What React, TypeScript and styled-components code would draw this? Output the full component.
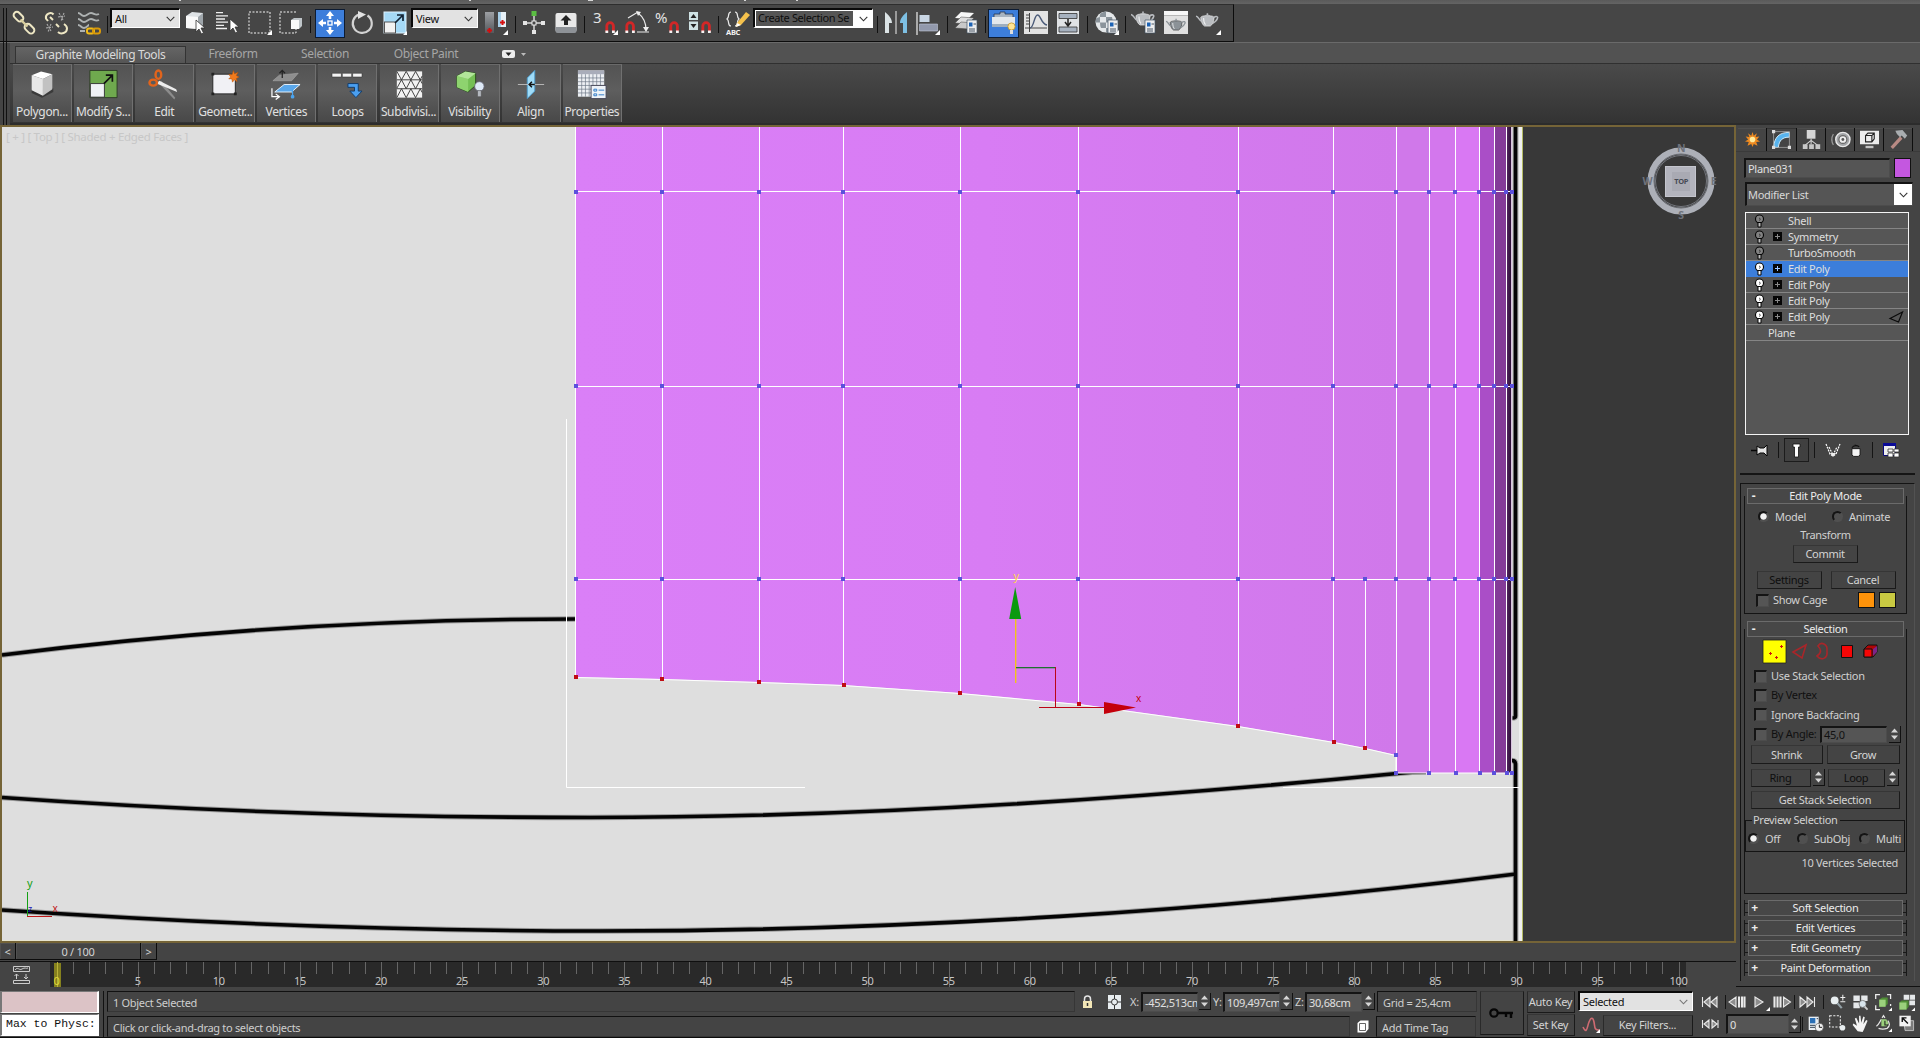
import React from "react";
import styled, { createGlobalStyle, css } from "styled-components";

const Global = createGlobalStyle`
  *, *::before, *::after { box-sizing: border-box; }
  body { margin: 0; background: #444; overflow: hidden; }
  svg { display: block; flex: none; overflow: visible; }
`;

const sans = `"Noto Sans", "Open Sans", "DejaVu Sans", sans-serif`;

const App_ = styled.div`
  width: 1920px;
  height: 1038px;
  display: flex;
  flex-direction: column;
  background: #444;
  color: #d8d8d8;
  font: 11px/14px ${sans};
  letter-spacing: -0.3px;
  white-space: nowrap;
  overflow: hidden;
`;

/* ---------- main toolbar ---------- */
const MenuEdge = styled.div`
  height: 4px;
  flex: none;
  display: flex;
  background: linear-gradient(#5a5a5a, #646464);
`;
const Descender = styled.i<{ $gap: number; $w?: number }>`
  width: ${(p) => p.$w ?? 2}px;
  height: 1px;
  margin-left: ${(p) => p.$gap}px;
  background: #d8d8d8;
`;
const ToolbarRow = styled.div`
  height: 39px;
  flex: none;
  display: flex;
  background: #464646;
  border-bottom: 1px solid #6a6a6a;
`;
const Toolbar = styled.div`
  width: 1234px;
  height: 38px;
  display: flex;
  border-top: 1px solid #2e2e2e;
  border-right: 1px solid #0c0c0c;
  border-bottom: 1px solid #0c0c0c;
  padding-top: 4px;
`;
const Grip = styled.div`
  width: 4px;
  margin: -1px 1px 0 3px;
  border-left: 1px solid #111;
  border-right: 1px solid #111;
`;
const Slot = styled.div<{ $w: number; $on?: boolean }>`
  width: ${(p) => p.$w}px;
  height: 29px;
  flex: none;
  display: flex;
  align-items: center;
  justify-content: center;
  padding-bottom: 2px;
  ${(p) => p.$on && css`background: #3d7edb; border: 1px solid #0d1c33; padding-bottom: 1px;`}
`;
const Divider = styled.div<{ $w: number }>`
  width: ${(p) => p.$w}px;
  display: flex;
  justify-content: center;
  padding: 7px 0 8px;
  &::before { content: ""; width: 1px; background: #111; }
`;
const Combo = styled.div<{ $w: number; $h?: number }>`
  width: ${(p) => p.$w}px;
  height: ${(p) => p.$h ?? 19}px;
  flex: none;
  display: flex;
  align-items: center;
  justify-content: space-between;
  padding: 0 4px 0 3px;
  color: #111;
  font-size: 11px;
  background: #e2e2e2;
  border: 1px solid #fff;
  border-top: 2px solid #0a0a0a;
  border-left: 2px solid #0a0a0a;
`;
const ToolCombo = styled(Combo)`
  margin: -1px 1px 0;
`;
const NameCombo = styled(Combo)`
  margin-top: -1px;
  padding: 1px 4px 1px 1px;
  background: #fff;
`;
const NameText = styled.span`
  width: 97px;
  height: 15px;
  overflow: hidden;
  padding-left: 2px;
  background: #555;
  color: #0d0d0d;
  letter-spacing: -0.4px;
`;
const Chevron = ({ c = "#333" }: { c?: string }) => (
  <svg width="9" height="6" viewBox="0 0 9 6"><path d="M.7.8 4.5 4.8 8.3.8" fill="none" stroke={c} strokeWidth="1.1" /></svg>
);

const Icon = ({ s = 24, children }: { s?: number; children: React.ReactNode }) => (
  <svg width={s} height={s} viewBox="0 0 24 24">{children}</svg>
);
const Corner = () => <path d="M24 19v5h-5z" fill="#fff" />;
const Magnet = ({ x, y }: { x: number; y: number }) => (
  <g transform={`translate(${x} ${y})`}>
    <path d="M1.8 11V5a3.3 3.3 0 0 1 6.6 0v6" fill="none" stroke="#d22727" strokeWidth="2.8" />
    <path d="M.4 9.4h2.8V12H.4zM7 9.4h2.8V12H7z" fill="#f4f4f4" />
  </g>
);
const MiniPanel = ({ x, y }: { x: number; y: number }) => (
  <g transform={`translate(${x} ${y})`}>
    <path d="M0 0h10v13H0z" fill="#eee" stroke="#456" strokeWidth=".7" />
    <path d="M2 2.5h3.5v4H2z" fill="#1d63b5" />
    <path d="M6.5 4H9M2 9h6M2 11h6" stroke="#345" strokeWidth=".9" />
  </g>
);
const Teapot = ({ fill = "#b9bcc0", line = "#efefef" }: { fill?: string; line?: string }) => (
  <g>
    <path d="M5 9c0-1 2-2 7-2s7 1 7 2c0 4-2 8-4 9H9C7 17 5 13 5 9z" fill={fill} stroke={line} strokeWidth=".7" />
    <path d="M6 13C3 12 3 8 0 7.500M18.500 9c3-2 5-1 4 1-.6 2-3 4-5 5" fill="none" stroke={fill} strokeWidth="1.600" />
    <path d="M9 7.200C9 5.800 15 5.800 15 7.200zM11.200 4.500h1.600v2h-1.600z" fill={fill} />
    <path d="M8 9.500c0 3 1 6 2 7" stroke="#fff" strokeWidth="1.100" fill="none" opacity=".8" />
  </g>
);

const G: Record<string, React.ReactNode> = {
  link: (
    <g fill="none" stroke="#eee7c4" strokeWidth="2">
      <rect x="1" y="2.500" width="11" height="6.500" rx="3.200" transform="rotate(45 6.500 5.700)" />
      <rect x="12" y="14.500" width="11" height="6.500" rx="3.200" transform="rotate(45 17.500 17.700)" />
      <path d="m8.500 8.500 7 7" stroke="#d9cf9f" strokeWidth="2.400" />
    </g>
  ),
  unlink: (
    <g fill="none" stroke="#eee7c4" strokeWidth="2">
      <path d="M9.500 3.500C7 .5 1 3 2 7.500l2 2.500M14 21c3 3 9 1 9-3.500 0-2-1.500-3.500-3-4.500M12 13l3 3M9 9 6 6" />
      <path d="M15 2l4 7M14 6l7-1M20 2l-3 8M3 13l4 7M2 17l7-1M7 13l-3 8" stroke="#a7a7a7" strokeWidth="1.200" strokeDasharray="2 1" />
    </g>
  ),
  bind: (
    <g fill="none">
      <path d="M1 2c3 0 3 3 6 3s4-3 7-3 4 3 8 1M1 8c3 0 3 3 6 3s4-3 7-3 4 3 8 1M1 14c3 0 3 3 6 3s4-3 5-3M3 20h5" stroke="#aeb2b2" strokeWidth="1.900" />
      <rect x="10" y="17.500" width="7" height="5" rx="2" stroke="#f3bc17" strokeWidth="2" />
      <rect x="16" y="17.500" width="7" height="5" rx="2" stroke="#d99a09" strokeWidth="2" />
    </g>
  ),
  select: (
    <g>
      <path d="m2 5 6-4 11 1v12l-5 4-12-1z" fill="#dfe3e6" /><path d="m2 5 12 1v12L2 17z" fill="#fafafa" /><path d="m14 6 5-4v12l-5 4z" fill="#9fa6ab" />
      <path d="M12 9v12l3-3 2.500 5 2-1-2.500-5h4z" fill="#fff" stroke="#333" strokeWidth=".8" />
    </g>
  ),
  byname: (
    <g stroke="#efefef" strokeWidth="1.300">
      <path d="M1 1.600h7M1 4.800h12M1 8h9M1 11.200h12M1 14.400h8M1 17.500h11" />
      <path d="M15 8v12l3-3 2.500 5 2-1L20 16h4z" fill="#fff" stroke="#333" strokeWidth=".8" />
    </g>
  ),
  rect: <g><rect x="1" y="1" width="21" height="21" fill="none" stroke="#f4f4f4" strokeDasharray="2 1.500" /><Corner /></g>,
  window: (
    <g><path d="M17 1H1v21h16v-5" fill="none" stroke="#f4f4f4" strokeDasharray="2 1.500" />
      <path d="m12 9 3-2h8v8l-3 3h-8z" fill="#bfc5c9" /><path d="M12 9h8v9h-8z" fill="#fafafa" /></g>
  ),
  move: (
    <g fill="#fff"><path d="m12 0 4 5h-2.700v3h-2.600V5H8zM12 24l4-5h-2.700v-3h-2.600v3H8zM0 12l5-4v2.700h3v2.600H5V16zM24 12l-5-4v2.700h-3v2.600h3V16z" /><rect x="10" y="10" width="4" height="4" fill="none" stroke="#fff" strokeWidth="1.300" /></g>
  ),
  rotate: (
    <g><path d="M9 3.500a9.500 9.500 0 1 0 8.500 1" fill="none" stroke="#d3d3d3" strokeWidth="2.200" /><path d="m8 0 8 3.500L8 8z" fill="#e3e3e3" /></g>
  ),
  scale: (
    <g><rect x="1" y="1" width="22" height="21" fill="#a5d9f6" stroke="#dff2fd" /><rect x="1.500" y="11" width="11" height="11" fill="#f2f2f2" stroke="#555" />
      <path d="m12 12 7-7M14 4h6v6" stroke="#123" strokeWidth="1.700" fill="none" /><path d="M24 20v4h-4z" fill="#fff" /></g>
  ),
  pivot: (
    <g><defs><linearGradient id="pv" x1="0" x2="0" y1="0" y2="1"><stop offset="0" stopColor="#9c9fa3" /><stop offset="1" stopColor="#55585c" /></linearGradient></defs>
      <path d="M1 1h9v21H1z" fill="url(#pv)" /><path d="M14 1h8v15h-8z" fill="#e6f0f6" /><path d="M14 1h3v15h-3z" fill="#a8cfe8" />
      <path d="M5.500 17v5M3 19.500h5M18.500 9v5M16 11.500h5" stroke="#d30f0f" strokeWidth="2" /><Corner /></g>
  ),
  manip: (
    <g><path d="M12 4v16M4 12h16" stroke="#d8d8d8" strokeWidth="1.500" /><rect x="9.500" y="0" width="5" height="5" fill="#5bbd43" />
      <rect x="10" y="10" width="4" height="4" fill="#464646" stroke="#eee" /><path d="M1 10h4v4H1zM19 10h4v4h-4zM10 19h4v4h-4z" fill="#e5e5e5" /></g>
  ),
  kbd: <g><rect x="1.500" y="2" width="21" height="19" rx="2" fill="#e9e9e9" /><path d="M1.500 16h21v4a2 2 0 0 1-2 2h-17a2 2 0 0 1-2-2z" fill="#8e9297" /><path d="m12 4 5.500 5.500H14V14h-4V9.500H6.500z" fill="#222" /></g>,
  snap3: <g transform="translate(1 0)"><text x="-1" y="12" fill="#e3e3e3" fontSize="15" fontFamily="Noto Sans">3</text><Magnet x={11} y={10} /><Corner /></g>,
  angle: <g transform="translate(1 0)"><Magnet x={0} y={10} /><path d="m3 7 10-6M12 21h12M13 2q8 6 8 17" stroke="#e9e9e9" strokeWidth="1.200" fill="none" /><path d="m11 0 5 1-3 4zM18 16l3 5 3-5z" fill="#eee" /></g>,
  percent: <g transform="translate(1 0)"><text x="-1" y="12" fill="#e3e3e3" fontSize="15" fontFamily="Noto Sans">%</text><Magnet x={13} y={10} /></g>,
  spinsnap: <g transform="translate(1 0)"><path d="M1 1h9v8H1zM1 10.500h9V19H1z" fill="#cfe2e4" /><path d="m2.500 7 3-4 3 4zM2.500 13l3 4 3-4z" fill="#222" /><Magnet x={13} y={10} /></g>,
  named: (
    <g><path d="M5 1C1 1 4 6 1 8c3 2 0 7 4 7M9 1c4 0 1 5 4 7-3 2 0 7-4 7" fill="none" stroke="#eaeaea" strokeWidth="1.200" />
      <path d="m11 12 9-11 4 3-9 10-5 2z" fill="#f5c14c" /><path d="m11 12 4 2-5 2z" fill="#fff" /><text x="0" y="23.500" fill="#f2f2f2" fontSize="7.500" fontWeight="700" fontFamily="Noto Sans">ABC</text></g>
  ),
  mirror: <g><path d="M1 1c4 3 7 7 7 11H5v10H1z" fill="#dbe3e5" /><path d="M23 1c-4 3-7 7-7 11h3v10h4z" fill="#7dbfe3" /><path d="M12 0v23" stroke="#eee" /></g>,
  align: <g><path d="M1 1v23" stroke="#eee" strokeWidth="1.200" /><path d="M3.500 4h10v7h-10z" fill="#c9d6e4" /><path d="M3.500 13h18v7h-18z" fill="#9299ac" stroke="#bfc6d6" strokeWidth=".6" /><Corner /></g>,
  layers: <g><path d="m7 1 13 1-6 6-13-1z" fill="#f7f7f7" /><path d="m7 6 13 1-6 6-13-1z" fill="#dedede" stroke="#444" strokeWidth=".5" /><path d="m7 11 13 1-6 6-13-1z" fill="#c9c9c9" stroke="#444" strokeWidth=".5" /><MiniPanel x={13} y={9} /></g>,
  folder: (
    <g><path d="M2 3h6V1h5v2h8v5H2z" fill="#a8b4c1" stroke="#273650" strokeWidth=".8" /><path d="M0 6h23v10H0z" fill="#e4e8ec" /><path d="M0 13h23v3H0z" fill="#9fafbf" />
      <circle cx="19.500" cy="15.500" r="3.600" fill="#ffe596" stroke="#c59320" strokeWidth=".8" /><path d="M18 19h3v4h-3z" fill="#ddd" /></g>
  ),
  curve: <g><path d="M0 0h24v23H0z" fill="#e3e3e3" /><path d="M5.500 2v19M1 17h22M2 4h3M2 7h3M2 10h3M2 13h3" stroke="#444" /><path d="M6 17C10 17 10 4 13.500 4S17 13 23 14" fill="none" stroke="#4a5a78" strokeWidth="1.400" /></g>,
  schem: <g><path d="M1 0h22v23H1z" fill="#dfe2e5" /><path d="M3 2.500h18v5H3zM3 16h18v5H3z" fill="#a7b2c0" stroke="#333" strokeWidth=".8" /><path d="M12 8v6M9 11l3 4 3-4" stroke="#222" strokeWidth="1.500" fill="none" /></g>,
  material: (
    <g><circle cx="11" cy="11" r="10.500" fill="#e5e8ea" />
      <path d="M5.500 2.500Q9 .5 11 .5V6H5q-1 0 .5-3.500zM11 6h6l1 5.500h-7zM1 7.500Q3 6 5 6v5.500H.5zM5 11.500h6V17H6q-1-2-1-5.500zM11 17h5q-1 3-3 4.300L11 21.500z" fill="#8b949b" /><MiniPanel x={13} y={9} /><Corner /></g>
  ),
  rsetup: <g><g transform="translate(-1 -4)"><Teapot /></g><MiniPanel x={13} y={9} /></g>,
  rframe: <g><path d="M0 0h24v23H0z" fill="#e0e0e0" /><path d="M0 0h24v4H0z" fill="#f6f6f6" /><path d="M0 4.500h24" stroke="#999" strokeWidth=".6" /><g transform="translate(2 4) scale(.84)"><Teapot fill="#8b9297" line="#333" /></g></g>,
  render: <g><g transform="translate(-1 -2) scale(.95)"><Teapot /></g><Corner /></g>,
};

/* kind, width, icon */
const tools: [string, number, string?][] = [
  ["i", 32, "link"], ["i", 32, "unlink"], ["i", 33, "bind"], ["d", 4], ["c", 72, "All"],
  ["i", 30, "select"], ["i", 32, "byname"], ["i", 34, "rect"], ["i", 28, "window"], ["d", 10],
  ["on", 30, "move"], ["i", 34, "rotate"], ["i", 31, "scale"], ["c", 69, "View"], ["i", 34, "pivot"], ["d", 4],
  ["i", 33, "manip"], ["i", 31, "kbd"], ["d", 7], ["i", 33, "snap3"], ["i", 29, "angle"], ["i", 34, "percent"],
  ["i", 30, "spinsnap"], ["d", 9], ["i", 30, "named"], ["n", 120, "Create Selection Se"], ["d", 8],
  ["i", 30, "mirror"], ["i", 34, "align"], ["d", 5], ["i", 32, "layers"], ["d", 6], ["on", 31, "folder"],
  ["i", 34, "curve"], ["i", 30, "schem"], ["d", 8], ["i", 32, "material"], ["d", 5], ["i", 32, "rsetup"],
  ["i", 32, "rframe"], ["i", 34, "render"],
];

/* ---------- ribbon ---------- */
const Ribbon = styled.div`
  height: 82px;
  flex: none;
  display: flex;
  background: #444;
`;
const RibbonBody = styled.div`
  flex: 1;
  margin-left: 2px;
  display: flex;
  flex-direction: column;
  background: #525252;
`;
const Tabs = styled.div`
  height: 21px;
  display: flex;
  align-items: flex-end;
  padding-left: 5px;
  border-bottom: 1px solid #303030;
  font-size: 12px;
  letter-spacing: -0.35px;
`;
const Tab = styled.div<{ $w: number; $on?: boolean }>`
  width: ${(p) => p.$w}px;
  height: 17px;
  line-height: 16px;
  text-align: center;
  color: ${(p) => (p.$on ? "#dadada" : "#a6a6a6")};
  ${(p) => p.$on && css`background: linear-gradient(#656565, #555); border: 1px solid #333; border-bottom: 0; line-height: 15px;`}
`;
const Panels = styled.div`
  flex: 1;
  display: flex;
  gap: 2.1px;
  padding: 0 0 1px 3px;
  background: linear-gradient(#4a4a4a, #333);
  border-bottom: 2px solid #2c2c2c;
`;
const Panel = styled.div`
  width: 59px;
  height: 58px;
  flex: none;
  display: flex;
  flex-direction: column;
  align-items: center;
  padding-top: 5px;
  background: linear-gradient(#535353, #5e5e5e 45%, #484848);
  border-top: 1px solid #6a6a6a;
  border-right: 1px solid #707070;
  font-size: 12px;
  line-height: 16px;
  letter-spacing: -0.35px;
  color: #e0e0e0;
  svg { margin-bottom: 5px; }
`;
const P = ({ children }: { children: React.ReactNode }) => <svg width="30" height="29" viewBox="0 0 32 30">{children}</svg>;
const panels: [string, React.ReactNode][] = [
  ["Polygon...", <><path d="M5 20v4l11 5 12-6v-4z" fill="#2c2c2c" opacity=".7" /><path d="m5 5 10-4 12 3-10 5z" fill="#fff" /><path d="m5 5 12 4v18L5 21z" fill="#e8e8e8" /><path d="m17 9 10-5v16l-10 7z" fill="#c2c2c2" /></>],
  ["Modify S...", <><path d="M2 0h29v29H2z" fill="#6fa94e" stroke="#2d3b25" /><path d="M2.500 14h15v14.500h-15z" fill="#f0f2f5" stroke="#333" /><path d="m17 14 8-8M19 5h7v7" stroke="#111" strokeWidth="1.800" fill="none" /></>],
  ["Edit", <><path d="m10 13 17 18 1-2L13 11z" fill="#8c8c8c" /><path d="m8 14 22 9-1-3-18-9z" fill="#ececec" /><g fill="none" stroke="#e1641c" strokeWidth="2.600"><ellipse cx="10" cy="4.500" rx="3" ry="4.500" /><ellipse cx="4.500" cy="13" rx="4" ry="3.200" /></g></>],
  ["Geometr...", <><path d="M3 4h24v21H3z" fill="#f1f1f5" stroke="#222" /><path d="M1.500 2.500h3v3h-3zM1.500 23.500h3v3h-3zM25.500 23.500h3v3h-3z" fill="#222" /><path d="m25 0 1.200 3.500L30 2l-2 3.500 3 1.500-3 1.500 1 3.500-3-2-2 2.500-.8-3.500L20 9l2-2-2-3 3.500.5z" fill="#f07a1d" stroke="#b24d05" strokeWidth=".5" /></>],
  ["Vertices", <><path d="m2 11 7-6 20-2-7 8z" fill="#8e8e8e" stroke="#aaa" strokeWidth=".6" /><path d="M12 8V0M9 3l3-3 3 3" stroke="#222" strokeWidth="1.300" fill="none" /><path d="m4 23 10-8h17l-9 8z" fill="#5aa7ea" stroke="#e7f3fd" /><path d="M1 19v9h7M5 25l4 3-4 3" stroke="#fff" strokeWidth="1.300" fill="none" /><path d="M23 20v8" stroke="#4ba4ef" strokeWidth="1.300" /><circle cx="23" cy="28" r="2" fill="#4ba4ef" /></>],
  ["Loops", <><path d="M0 3h10v4H0zM11 3h10v4H11zM22 3h10v4H22z" fill="#f4f4f4" stroke="#333" strokeWidth=".6" /><path d="M17 14h11v8h4l-6.500 7-6.500-7h5v-4h-7z" fill="#4a9ff0" stroke="#123a66" /></>],
  ["Subdivisi...", <><path d="M3 1h27v28H3z" fill="#f2f2f2" /><path d="M3 10h27M3 19.500h27M3 1l5 9 5-9 5 9 5-9 5 9 2-4M3 19l5-9 5 9.500L18 10l5 9.500L28 10l2 4M3 29l5-9.500 5 9.500 5-9.500 5 9.500 5-9.500 2 4" stroke="#3a3a3a" fill="none" /></>],
  ["Visibility", <><path d="m2 6 9-5 11 2v13l-8 7-12-5z" fill="#74bf55" stroke="#294b1d" /><path d="m2 6 12 3v14L2 18z" fill="#8ed36f" /><path d="m2 6 9-5 11 2-8 6z" fill="#b2e69a" /><circle cx="26" cy="17" r="5" fill="#dde9f6" stroke="#667" strokeWidth=".8" /><path d="M24 21.500h4V28h-4z" fill="#b5b9c0" stroke="#444" strokeWidth=".5" /></>],
  ["Align", <><path d="M12 8 20 0v22l-8 8z" fill="#9fdcf8" stroke="#4f9ccc" /><path d="M2 15h28" stroke="#c5c5c5" strokeWidth=".9" /><path d="M14 15h6M17 12l-3 3 3 3" stroke="#111" strokeWidth="1.500" fill="none" /></>],
  ["Properties", <><path d="M1 0h28v28H1z" fill="#edf0f4" /><path d="M1 0h28v4H1z" fill="#a9adba" /><path d="M1 8h28M1 12h28M1 16h28M1 20h28M1 24h28M5 4v24M9 4v24M13 4v24M17 4v24M21 4v24M25 4v24" stroke="#6a7484" strokeWidth=".7" /><path d="M15 16h16v14H15z" fill="#eef3f8" stroke="#445" /><path d="M18 20h3v2h-3zM18 25h3v2h-3z" fill="none" stroke="#2b79c8" /><path d="M23 21h6M23 26h6" stroke="#2b79c8" /></>],
];

/* ---------- viewport ---------- */
const Work = styled.div`
  height: 862px;
  flex: none;
  display: flex;
`;
const LeftCol = styled.div`
  width: 1736px;
  display: flex;
  flex-direction: column;
`;
const cols = [662, 759, 843, 960, 1078, 1238, 1333, 1396, 1429, 1455, 1479, 1494, 1506];
/* edge row, centre of its vertex ticks */
const rows: [number, number][] = [[191, 192], [386, 386], [579, 579]];
const reds: [number, number][] = [[576, 677], [662, 679], [759, 682], [844, 685], [960, 693], [1079, 704], [1238, 726], [1334, 742], [1365, 748]];
const bottomOf = (x: number) => (x >= 1396 ? 773 : (reds.find((r) => Math.abs(r[0] - x) < 2) ?? [0, 748])[1]);

const Viewport = () => (
  <svg width="1736" height="818" viewBox="0 125 1736 818" fontFamily="Noto Sans">
    <defs>
      <linearGradient id="mesh" gradientUnits="userSpaceOnUse" x1="576" x2="1396" y1="0" y2="0">
        <stop offset="0" stopColor="#da7ff7" /><stop offset=".5" stopColor="#d87cf4" /><stop offset="1" stopColor="#d078ea" />
      </linearGradient>
      <linearGradient id="edge" x1="0" x2="1" y1="0" y2="0"><stop offset="0" stopColor="#5a2869" /><stop offset="1" stopColor="#220d29" /></linearGradient>
    </defs>
    <rect y="125" width="1736" height="818" fill="#756437" />
    <rect x="2" y="127" width="1732" height="814" fill="#383838" />
    <rect x="2" y="127" width="1520" height="814" fill="#dedede" />
    <path d="M2 940.500h1520" stroke="#e6e4cf" />
    <path d="M1520.500 127v814" stroke="#efefef" strokeWidth="3" />
    <path d="M1522.500 127v814" stroke="#b3bb62" />
    <g fill="none" stroke="#9a9a9a" strokeWidth="5.500">
      <path d="M2 655Q288 619 576 619" />
      <path d="M2 797.500C200 811.500 400 817.500 590 817.500c260 0 540-18 807-44q16-1.500 29-1.500" />
      <path d="M2 910c178 12 398 21 598 21 300 0 620-20 916-57" />
      <path d="M1515.500 127v589q0 2-3 2M1512 760.500q3.500 0 3.500 4v176.500" />
    </g>
    <g fill="none" stroke="#040404" strokeWidth="3.600">
      <path d="M2 655Q288 619 576 619" />
      <path d="M2 797.500C200 811.500 400 817.500 590 817.500c260 0 540-18 807-44q16-1.500 29-1.500" />
      <path d="M2 910c178 12 398 21 598 21 300 0 620-20 916-57" />
      <path d="M1515.500 127v589q0 2-3 2M1512 760.500q3.500 0 3.500 4v176.500" />
    </g>
    <path d="M575 127h937v646h-116v-18l-31-7-31-6-96-16-159-22-119-11-117-8-84-3-97-3-87-2z" fill="url(#mesh)" />
    <path d="M1429 127h26v646h-26z" fill="#d377ed" /><path d="M1455 127h24v646h-24z" fill="#d978f3" />
    <path d="M1479 127h15v646h-15z" fill="#aa4ec7" /><path d="M1494 127h12v646h-12z" fill="#843b98" />
    <path d="M1506 127h6v646h-6z" fill="url(#edge)" />
    <g stroke="#fff" fill="none">
      {cols.map((x) => <path key={x} d={`M${x + 0.5} 127V${bottomOf(x)}`} />)}
      <path d="M575.500 127v550M1365.500 579v169" /><path d="M1511.500 127v646" stroke="#d9c4df" />
      {rows.map(([y]) => <path key={y} d={`M575 ${y + 0.5}H1512`} />)}
      <path d="m576 677.500 86 2 97 3 84 3 117 8 119 11 159 22 96 16 31 6 31 7v17.500h116" />
      <path d="M566.500 419v368.500H805M1283 787.500h236" />
    </g>
    <g fill="#5c50dc">
      {rows.map(([, y]) => [576, ...cols, ...(y === 579 ? [1365] : []), 1512].map((x) => <rect key={`${x}-${y}`} x={x - 2} y={y - 2} width="4" height="4" />))}
      {[1396, 1429, 1456, 1480, 1494, 1507, 1512].map((x) => <rect key={x} x={x - 2} y="771" width="4" height="4" />)}
      <rect x="1394" y="753" width="4" height="4" />
    </g>
    <g fill="#c00c14">{reds.map(([x, y]) => <rect key={x} x={x - 2} y={y - 2} width="4" height="4" />)}</g>
    <rect x="1015" y="619" width="1.400" height="64" fill="#f2c518" /><path d="m1015.200 587 6 32h-12z" fill="#0a9a0e" />
    <rect x="1016" y="667" width="39" height="1.300" fill="#1f7030" />
    <path d="M1055.500 667v40M1039 707.500h66" stroke="#bb0517" fill="none" /><path d="m1136 707.500-32 6.500v-12z" fill="#c4000b" />
    <text x="1013.500" y="579.500" fontSize="11" fill="#ffd84a">y</text><text x="1136" y="702" fontSize="10" fill="#c4000b">x</text>
    <path d="M27.500 892v25" stroke="#14a014" /><path d="M27 916.500h25" stroke="#c01818" />
    <text x="27" y="887" fontSize="11" fill="#14a014">y</text><text x="52.500" y="912" fontSize="10" fill="#c01818">x</text><text x="28" y="912" fontSize="9" fill="#1616b4">z</text>
    <text x="6" y="141" fontSize="11.500" textLength="182" fill="#c7c7c7">[ + ] [ Top ] [ Shaded + Edged Faces ]</text>
    <circle cx="1681" cy="181" r="30" fill="none" stroke="#adb0b8" strokeWidth="7" />
    <circle cx="1681" cy="181" r="25.500" fill="none" stroke="#74777e" /><circle cx="1681" cy="181" r="27" fill="none" stroke="#54575c" strokeWidth=".8" />
    <rect x="1665.500" y="166.500" width="30" height="30" fill="#b3b4bd" stroke="#c4c5cd" /><rect x="1672" y="172" width="18" height="19" fill="#a9aab3" />
    <g fill="#6f737c" fontWeight="700" fontSize="10.500" textAnchor="middle">
      <text x="1681" y="152">N</text><text x="1681" y="218.500">S</text><text x="1647.500" y="185">W</text><text x="1713.500" y="185">E</text>
      <text x="1681.300" y="184" fontSize="7.500" fill="#474a55">TOP</text>
    </g>
  </svg>
);

/* ---------- time slider and track bar ---------- */
const SliderRow = styled.div`
  height: 19px;
  display: flex;
  align-items: flex-start;
  border-bottom: 1px solid #0f0f0f;
  color: #d4d4d4;
`;
const SliderCell = styled.div<{ $w: number }>`
  width: ${(p) => p.$w}px;
  height: 17px;
  line-height: 17px;
  text-align: center;
  border-right: 1px solid #0c0c0c;
  border-bottom: 1px solid #0c0c0c;
  box-shadow: inset 1px 1px #505050;
`;
const Track = styled.div`
  height: 25px;
  display: flex;
`;
const TrackButton = styled.div`
  width: 50px;
  display: flex;
  align-items: center;
  padding-left: 13px;
`;
const Ruler = () => (
  <svg width="1650" height="25" viewBox="50 962 1650 25" fontFamily="Noto Sans" fontSize="11">
    <path d="M50 962h1636v25H50z" fill="#292929" />
    <path d="M54 963h7v24h-7z" fill="#85811e" />
    {Array.from({ length: 101 }, (_, i) => {
      const x = Math.floor(57.2 + i * 16.22) + 0.5;
      return <path key={i} d={`M${x} 962v${i % 5 ? 12 : 25}`} stroke={i ? "#666" : "#b9b13a"} />;
    })}
    {Array.from({ length: 21 }, (_, i) => (
      <text key={i} x={56.6 + i * 81.1} y="985" textAnchor="middle" fill={i ? "#c6c6c6" : "#ded83a"}>{i * 5}</text>
    ))}
  </svg>
);

/* ---------- command panel ---------- */
const Side = styled.div`
  width: 184px;
  display: flex;
  flex-direction: column;
  background: #444;
  border-bottom: 1px solid #111;
`;
const CommandTabs = styled.div`
  height: 27px;
  padding: 3px 0 0 2px;
  display: flex;
  border-bottom: 1px solid #3a3a3a;
`;
const CommandTab = styled.div<{ $w: number; $on?: boolean }>`
  width: ${(p) => p.$w}px;
  height: 23px;
  display: flex;
  align-items: center;
  justify-content: center;
  border-right: 1px solid #0d0d0d;
  box-shadow: inset 0 1px ${(p) => (p.$on ? "#333" : "#4e4e4e")};
`;
const NameRow = styled.div`
  display: flex;
  justify-content: space-between;
  margin: 6px 9px 0 8px;
`;
const sunken = css`
  background: #555;
  border: 1px solid #4c4c4c;
  border-top: 2px solid #141414;
  border-left: 2px solid #141414;
`;
const Field = styled.div<{ $w: number; $h: number; $dim?: boolean }>`
  width: ${(p) => p.$w}px;
  height: ${(p) => p.$h}px;
  flex: none;
  line-height: ${(p) => p.$h - 3}px;
  padding-left: 2px;
  overflow: hidden;
  ${sunken}
  color: ${(p) => (p.$dim ? "#111" : "#e0e0e0")};
`;
const Swatch = styled.div<{ $c: string; $w: number; $h: number }>`
  width: ${(p) => p.$w}px;
  height: ${(p) => p.$h}px;
  background: ${(p) => p.$c};
  border: 1px solid #111;
`;
const ModifierList = styled.div`
  height: 24px;
  margin: 4px 7px 0 9px;
  display: flex;
  align-items: center;
  padding-left: 1px;
  ${sunken}
`;
const ModButton = styled.div`
  width: 18px;
  height: 21px;
  margin-left: auto;
  display: grid;
  place-items: center;
  background: #fff;
`;
const Stack = styled.div`
  height: 223px;
  margin: 6px 11px 0 9px;
  background: #565656;
  border: 1px solid #f4f4f4;
`;
const StackRow = styled.div<{ $on?: boolean; $indent?: boolean }>`
  height: 16px;
  display: flex;
  align-items: center;
  padding-left: ${(p) => (p.$indent ? 22 : 8)}px;
  border-bottom: 1px solid #858585;
  color: #dedede;
  ${(p) => p.$on && css`background: #3c7edb; border-color: #3c7edb;`}
`;
const PlusCell = styled.div`
  width: 23px;
  padding-left: 8px;
`;
const Camera = styled.div`
  margin: 0 4px 0 auto;
`;
const Bulb = ({ on }: { on?: boolean }) => (
  <svg width="11" height="14" viewBox="0 0 11 14">
    <circle cx="5.500" cy="5" r="4" fill={on ? "#fff" : "#828282"} stroke="#050505" strokeWidth="1.100" />
    <path d="M4 8.500h3V13H4z" fill={on ? "#fff" : "#bbb"} stroke="#050505" /><path d="M5 3.800 6.500 5.200 5 6.500" fill="none" stroke="#222" strokeWidth=".8" />
  </svg>
);
const Plus = ({ c = "#8a8a8a" }: { c?: string }) => (
  <svg width="9" height="9" viewBox="0 0 9 9"><path d="M0 0h9v9H0z" fill="#060606" /><path d="M2 4.500h5M4.500 2v5" stroke={c} /></svg>
);
const StackTools = styled.div`
  height: 38px;
  display: flex;
  padding: 3px 0 11px 10px;
`;
const StackTool = styled.div<{ $w: number; $on?: boolean }>`
  width: ${(p) => p.$w}px;
  height: 24px;
  display: grid;
  place-items: center;
  ${(p) => p.$on && css`border: 1px solid #1c1c1c; background: #404040;`}
`;
const Thin = styled.div<{ $w: number }>`
  width: ${(p) => p.$w}px;
  display: flex;
  align-self: stretch;
  justify-content: center;
  padding: 4px 0;
  &::before { content: ""; width: 1px; background: #151515; }
`;
const Rollouts = styled.div`
  height: 508px;
  margin: 0 5px 0 4px;
  padding-top: 8px;
  border-top: 2px solid #151515;
`;
const RollArea = styled.div`
  height: 498px;
  border-top: 1px solid #141414;
  border-left: 1px solid #141414;
  border-right: 1px solid #525252;
  padding: 4px 7px 0 3px;
`;
const Roll = styled.section<{ $h: number; $gap?: number }>`
  height: ${(p) => p.$h}px;
  margin-bottom: ${(p) => p.$gap ?? 7}px;
  display: flex;
  flex-direction: column;
  background: linear-gradient(#141414, #141414) 0 8px / 1px 100% no-repeat,
    linear-gradient(#141414, #141414) 100% 8px / 1px 100% no-repeat;
  border-bottom: 1px solid #141414;
`;
const Closed = styled.section`
  height: 16px;
  margin-bottom: 4px;
  border: 1px solid #181818;
  border-top-width: 0;
  border-bottom-width: 0;
  background: linear-gradient(#181818, #181818) 0 3px / 100% 1px no-repeat, linear-gradient(#181818, #181818) 0 12px / 100% 1px no-repeat;
`;
const Head = styled.h3`
  height: 16px;
  margin: 0 3px;
  flex: none;
  display: flex;
  align-items: center;
  background: #474747;
  border: 1px solid #6b6b6b;
  font: 400 11px/14px ${sans};
  color: #ececec;
  span { flex: 1; text-align: center; padding-right: 11px; }
  b { width: 11px; text-align: center; font-size: 12px; }
`;
const Line = styled.div<{ $h: number; $x?: number; $right?: boolean; $mid?: boolean }>`
  height: ${(p) => p.$h}px;
  flex: none;
  display: flex;
  align-items: center;
  padding-left: ${(p) => p.$x ?? 0}px;
  ${(p) => p.$right && css`justify-content: flex-end; padding-right: 9px;`}
  ${(p) => p.$mid && css`justify-content: center;`}
  color: #d0d0d0;
`;
const Gap = styled.span<{ $w: number }>`
  width: ${(p) => p.$w}px;
  flex: none;
`;
const Label = styled.span<{ $w?: number; $dim?: boolean }>`
  ${(p) => p.$w && css`width: ${p.$w}px;`}
  flex: none;
  color: ${(p) => (p.$dim ? "#101010" : "#d2d2d2")};
`;
const Radio = styled.i<{ $on?: boolean }>`
  width: 11px;
  height: 11px;
  flex: none;
  border-radius: 50%;
  border: 2px solid #141414;
  border-right-color: #505050;
  border-bottom-color: #505050;
  background: ${(p) => (p.$on ? "radial-gradient(#f2f2f2 55%, #555 75%)" : "#505050")};
`;
const Check = styled.i`
  width: 13px;
  height: 13px;
  flex: none;
  margin-right: 4px;
  ${sunken}
`;
const Button = styled.div<{ $w: number; $h?: number; $dim?: boolean }>`
  width: ${(p) => p.$w}px;
  height: ${(p) => p.$h ?? 18}px;
  flex: none;
  display: flex;
  align-items: center;
  justify-content: center;
  padding-right: 1px;
  border: 1px solid #1a1a1a;
  border-top-color: #363636;
  border-left-color: #2a2a2a;
  color: ${(p) => (p.$dim ? "#0e0e0e" : "#d4d4d4")};
`;
const SpinBox = styled.div`
  width: 12px;
  height: 17px;
  flex: none;
  display: grid;
  place-items: center;
  border-right: 1px solid #111;
  border-bottom: 1px solid #111;
`;
const Spin = () => (
  <SpinBox><svg width="7" height="12" viewBox="0 0 7 12"><path d="m0 4.500 3.500-4 3.500 4zM0 7.500l3.500 4 3.500-4z" fill="#d6d6d6" /></svg></SpinBox>
);
const Group = styled.fieldset`
  height: 38px;
  width: 160px;
  margin: 3px 0 0 1px;
  padding: 1px 0 0 2px;
  flex: none;
  border: 1px solid #141414;
  color: #d2d2d2;
  legend { margin-left: 4px; padding: 0 2px 0 1px; height: 12px; line-height: 11px; }
`;

/* ---------- status bar ---------- */
const Status = styled.div`
  height: 51px;
  flex: none;
  display: flex;
  padding-top: 4px;
  border-bottom: 1px solid #0c0c0c;
`;
const Listener = styled.div`
  width: 99px;
  margin-right: 4px;
`;
const Mini = styled.div<{ $c: string }>`
  height: 22px;
  margin-bottom: 1px;
  padding-left: 4px;
  overflow: hidden;
  background: ${(p) => p.$c};
  border: 1px solid #fff;
  border-top: 1px solid #777;
  border-left: 2px solid #777;
  border-right-width: 2px;
  color: #111;
  font: 11.5px/17px "Liberation Mono", monospace;
  letter-spacing: 0;
`;
const StatusCol = styled.div<{ $w: number }>`
  width: ${(p) => p.$w}px;
  display: flex;
  flex-direction: column;
  gap: 4px;
  padding-left: 3px;
  border-left: 1px solid #111;
`;
const SRow = styled.div`
  height: 21px;
  display: flex;
  align-items: center;
`;
const Prompt = styled.div<{ $w: number }>`
  width: ${(p) => p.$w}px;
  height: 21px;
  flex: none;
  padding-left: 5px;
  line-height: 22px;
  color: #cecece;
  border: 1px solid #363636;
  border-top-color: #111;
  border-left: 1px solid #111;
`;
const KeyCol = styled.div<{ $w: number; $gap?: number; $m: number }>`
  width: ${(p) => p.$w}px;
  margin-left: ${(p) => p.$m}px;
  display: flex;
  flex-direction: column;
  gap: ${(p) => p.$gap ?? 1}px;
`;
const Bits = styled.div<{ $h?: number }>`
  height: ${(p) => p.$h ?? 22}px;
  display: flex;
  align-items: center;
`;
const Bit = styled.div<{ $w: number }>`
  width: ${(p) => p.$w}px;
  height: 22px;
  flex: none;
  display: grid;
  place-items: center;
`;
const NavGrid = styled.div`
  display: grid;
  grid-template-columns: repeat(4, 23px);
  grid-template-rows: 22px 21px;
  place-items: center;
  margin-left: -3px;
`;
const Play = ({ d, w = 18, corner }: { d: string; w?: number; corner?: boolean }) => (
  <svg width={w + 4} height="18" viewBox={`0 0 ${w + 4} 18`}>
    <path d={d} fill="#8d8d8d" stroke="#e9e9e9" strokeWidth="1.100" />
    {corner && <path d={`M${w + 3} 14v4h-4z`} fill="#fff" />}
  </svg>
);
const nav: React.ReactNode[] = [
  <><circle cx="8" cy="9" r="5.500" fill="#e8eef0" /><path d="m12 13 6 7" stroke="#93a0a6" strokeWidth="3" /><path d="M16 5h7M19.500 1v8M16 11h7" stroke="#eee" strokeWidth="1.500" /></>,
  <><path d="M2 2h9v8H2zM13 2h9v8h-9zM2 12h9v8H2z" fill="#e5e8ea" /><circle cx="15" cy="14" r="5" fill="#d7e3ea" stroke="#666" /><path d="m18 18 4 4" stroke="#ccc" strokeWidth="2.500" /></>,
  <><path d="M7 1H1v6M17 1h5v6M1 16v6h6M22 14v3" fill="none" stroke="#eee" strokeWidth="1.800" /><path d="m6 8 4-3h8v9l-4 4H6z" fill="#4f8d35" /><path d="M6 8h9v10H6z" fill="#9bd07c" /><Corner /></>,
  <><path d="M8 1h8v7H8zM17 1h7v7h-7zM16 9h8v7h-8z" fill="#e5e8ea" /><path d="m2 12 3-3h10v9l-3 4H2z" fill="#4f8d35" /><path d="M2 12h10v10H2z" fill="#9bd07c" /><Corner /></>,
  <><path d="M1 1h15v16H1z" fill="none" stroke="#eee" strokeWidth="1.500" strokeDasharray="3 2" /><circle cx="19" cy="18" r="4" fill="#e8eef0" /></>,
  <><path d="M8 23 1 14l1-2 5 3-3-10 2-1 4 8V1h2l1 10 3-9 2 1-2 10 4-6 2 1-5 12-2 4z" fill="#f4f4f4" /></>,
  <><path d="M2 16c3-2 4-5 7-10M10 4l2-3 2 3M18 8q5 6-1 11-6 2-12 0" fill="none" stroke="#e5e5e5" strokeWidth="1.800" /><path d="M9 6h7l3 6-3 4H9z" fill="#9bd07c" /><path d="M14 8v6h5" stroke="#222" strokeWidth="1.500" fill="none" /><Corner /></>,
  <><path d="M8 8h14v14H10z" fill="#7b7b7b" stroke="#ddd" /><path d="M2 1h16v15H2z" fill="#f2f2f2" /><path d="M14 12 7 5M6 10V4h6" stroke="#111" strokeWidth="2" fill="none" /></>,
];

const mods: [string, boolean, boolean, boolean?][] = [
  ["Shell", false, false], ["Symmetry", false, true], ["TurboSmooth", false, false],
  ["Edit Poly", true, true, true], ["Edit Poly", true, true], ["Edit Poly", true, true], ["Edit Poly", true, true],
];

export default function App() {
  return (
    <App_>
      <Global />
      <MenuEdge><Descender $gap={179} /><Descender $gap={288} /><Descender $gap={117} $w={5} /><Descender $gap={151} /><Descender $gap={50} /></MenuEdge>
      <ToolbarRow>
        <Toolbar>
          <Grip />
          {tools.map(([k, w, n], i) =>
            k === "d" ? <Divider key={i} $w={w} />
              : k === "c" ? <ToolCombo key={i} $w={w - 2} $h={20}>{n}<Chevron /></ToolCombo>
                : k === "n" ? <NameCombo key={i} $w={w} $h={20}><NameText>{n}</NameText><Chevron /></NameCombo>
                  : <Slot key={i} $w={w} $on={k === "on"}><Icon>{G[n!]}</Icon></Slot>
          )}
        </Toolbar>
      </ToolbarRow>
      <Ribbon>
        <Grip />
        <RibbonBody>
          <Tabs>
            <Tab $w={171} $on>Graphite Modeling Tools</Tab><Tab $w={94}>Freeform</Tab><Tab $w={90}>Selection</Tab><Tab $w={112}>Object Paint</Tab>
            <Tab $w={76}>
              <svg width="76" height="16" viewBox="0 0 76 16"><rect x="20" y="4" width="13" height="8" rx="2" fill="#ededed" /><path d="M23.500 6.500h6l-3 3.500z" fill="#222" /><path d="M39 7h5l-2.500 3z" fill="#bbb" /></svg>
            </Tab>
          </Tabs>
          <Panels>{panels.map(([t, ic]) => <Panel key={t}><P>{ic}</P>{t}</Panel>)}</Panels>
        </RibbonBody>
      </Ribbon>
      <Work>
        <LeftCol>
          <Viewport />
          <SliderRow><SliderCell $w={16}>&lt;</SliderCell><SliderCell $w={125}>0 / 100</SliderCell><SliderCell $w={16}>&gt;</SliderCell></SliderRow>
          <Track>
            <TrackButton>
              <svg width="17" height="18" viewBox="0 0 17 18"><path d="M.5.5h16v5H.5zM.5 14.500h16v3H.5z" fill="none" stroke="#ccc" /><path d="M2 4c3-4 4 1 7-1s4 0 6-1M3.500 13V8M1.500 10l2-2 2 2M13 8v5M11 11l2 2 2-2" stroke="#ccc" fill="none" /></svg>
            </TrackButton>
            <Ruler />
          </Track>
        </LeftCol>
        <Side>
          <CommandTabs>
            <CommandTab $w={29}><Icon s={15}><path d="m12 0 2 6 5-4-2 6 6-1-4 5 5 3-6 1 2 6-6-3-2 5-2-5-6 3 2-6-6-1 5-3-4-5 6 1-2-6 5 4z" fill="#ee8a20" /><circle cx="12" cy="12" r="4.500" fill="#ffeb9c" /></Icon></CommandTab>
            <CommandTab $w={30} $on><Icon s={19}><path d="M2 22C3 9 9 3 22 3v6C13 9 9 13 8 22z" fill="#58b4ee" stroke="#d5effd" strokeWidth="1.200" /><path d="M2 22V2h20v20z" fill="none" stroke="#a5a5a5" /><path d="M0 0h4v4H0zM20 20h4v4h-4zM0 20h4v4H0z" fill="#ddd" /></Icon></CommandTab>
            <CommandTab $w={29}><Icon s={19}><path d="M6 0h11v11H6z" fill="#d6d6d6" /><path d="M11.500 11v7M11.500 13 4 19M11.500 13l8 6" stroke="#d6d6d6" strokeWidth="1.300" /><path d="M1 18h6v6H1zM9 18h6v6H9zM17 18h6v6h-6z" fill="#c7c7c7" /></Icon></CommandTab>
            <CommandTab $w={29}><Icon s={19}><circle cx="15" cy="12" r="9" fill="#a3a5a8" stroke="#e9e9e9" strokeWidth="1.800" /><circle cx="15" cy="12" r="5" fill="#eee" stroke="#666" strokeWidth="1.500" /><circle cx="15" cy="12" r="1.800" fill="#555" /><path d="M3 5q-4 7 0 14" stroke="#999" strokeWidth="1.500" fill="none" /></Icon></CommandTab>
            <CommandTab $w={29}><Icon s={19}><path d="M0 1h24v17H0z" fill="#ececec" /><path d="M7 20h10v3H7z" fill="#c2c2c2" /><path d="m7 7 3-3h8v7l-3 4H7zM7 7h8v8M15 7l3-3" fill="none" stroke="#222" strokeWidth="1.400" /></Icon></CommandTab>
            <CommandTab $w={29}><Icon s={19}><path d="m2 21 12-13 3 3L5 24z" fill="#b88a84" /><path d="m8 1 9-1 6 7-3 4-4-4-2 2-4-4z" fill="#a9adb0" /></Icon></CommandTab>
          </CommandTabs>
          <NameRow><Field $w={146} $h={20}>Plane031</Field><Swatch $c="#c457e0" $w={17} $h={20} /></NameRow>
          <ModifierList>Modifier List<ModButton><Chevron /></ModButton></ModifierList>
          <Stack>
            {mods.map(([t, on, plus, sel], i) => (
              <StackRow key={i} $on={sel}>
                <Bulb on={on} /><PlusCell>{plus && <Plus c={sel ? "#9cc4ff" : undefined} />}</PlusCell>{t}
                {i === 6 && <Camera><svg width="15" height="12" viewBox="0 0 15 12"><path d="M1 7.500 13.500 1 9.500 11z" fill="none" stroke="#0a0a0a" strokeWidth="1.200" /></svg></Camera>}
              </StackRow>
            ))}
            <StackRow $indent>Plane</StackRow>
          </Stack>
          <StackTools>
            <StackTool $w={27}><svg width="17" height="11" viewBox="0 0 17 11"><path d="M0 5.500h6" stroke="#050505" strokeWidth="1.500" /><path d="M6 1v9l3-2h4l3 3V0l-3 3H9z" fill="#e6e6e6" stroke="#050505" /></svg></StackTool>
            <Thin $w={11} />
            <StackTool $w={25} $on><svg width="9" height="15" viewBox="0 0 9 15"><path d="M1 1h7v3H6.500v10h-4V4H1z" fill="#fff" stroke="#111" strokeWidth=".8" /></svg></StackTool>
            <Thin $w={10} />
            <StackTool $w={27}><svg width="16" height="14" viewBox="0 0 16 14"><path d="m1 1 4 10 3 2 3-2 4-10M4 4l4 8 4-8" fill="none" stroke="#fff" strokeWidth="1.200" strokeDasharray="2 1" /><path d="M5 10h6l-3 4z" fill="#eee" /></svg></StackTool>
            <StackTool $w={19}><svg width="10" height="13" viewBox="0 0 11 14"><path d="M1 5h9v7l-2 1.500H3L1 12z" fill="#f4f4f4" stroke="#111" /><path d="M1 4c2-3 6-3 8-1M4 1l4 1" stroke="#111" strokeWidth="1.300" fill="none" /></svg></StackTool>
            <Thin $w={15} />
            <StackTool $w={22}><svg width="16" height="15" viewBox="0 0 16 15"><path d="M.5.500h12v12H.500z" fill="#eee" stroke="#0b0b78" /><path d="M0 0h13v3H0z" fill="#0b0b98" /><path d="M5 6h5v3H5zM11 6h5v3h-5zM5 10h5v4H5zM11 10h5v4h-5z" fill="#fff" stroke="#333" strokeWidth=".8" /></svg></StackTool>
          </StackTools>
          <Rollouts>
            <RollArea>
              <Roll $h={126}>
                <Head><b>-</b><span>Edit Poly Mode</span></Head>
                <Line $h={25} $x={14}><Radio $on /><Gap $w={6} /><Label $w={57}>Model</Label><Radio /><Gap $w={6} /><Label>Animate</Label></Line>
                <Line $h={12} $mid>Transform</Line>
                <Line $h={26} $mid><Button $w={65}>Commit</Button></Line>
                <Line $h={25} $x={13}><Button $w={65} $dim>Settings</Button><Gap $w={9} /><Button $w={65}>Cancel</Button></Line>
                <Line $h={16} $x={12}><Check /><Label $w={85}>Show Cage</Label><Swatch $c="#ff930a" $w={17} $h={16} /><Gap $w={4} /><Swatch $c="#c9ca42" $w={17} $h={16} /></Line>
              </Roll>
              <Roll $h={273} $gap={6}>
                <Head><b>-</b><span>Selection</span></Head>
                <Line $h={29} $x={19}>
                  <svg width="120" height="23" viewBox="0 0 120 23">
                    <path d="M0 0h23v23H0z" fill="#ff0" stroke="#222" strokeWidth=".8" /><path d="M18.500 5v3M17 6.500h3M7.500 12v3M6 13.500h3M13.500 16v3M12 17.500h3" stroke="#d01010" />
                    <path d="M30 12 43 5l-4 13z" fill="none" stroke="#a8262a" strokeWidth="1.600" /><path d="M55 6c3-5 10-2 9 5 1 8-6 10-10 5 5-3 4-7 1-10z" fill="none" stroke="#a8262a" strokeWidth="1.600" />
                    <path d="M78.500 5.500h11v12h-11z" fill="#f60606" stroke="#111" /><path d="m101 9 4-4h9v7l-4 5h-9z" fill="#b00505" stroke="#111" /><path d="M101 9h8v8h-8z" fill="#f60606" stroke="#111" /><path d="m110 9 4-3v6l-4 4z" fill="#7d2488" />
                  </svg>
                </Line>
                <Line $h={20} $x={10}><Check />Use Stack Selection</Line>
                <Line $h={18} $x={10}><Check /><Label $dim>By Vertex</Label></Line>
                <Line $h={21} $x={10}><Check />Ignore Backfacing</Line>
                <Line $h={18} $x={10}><Check /><Label $dim $w={49}>By Angle:</Label><Field $w={67} $h={17} $dim>45,0</Field><Gap $w={2} /><Spin /></Line>
                <Line $h={23} $x={7}><Button $w={72} $h={19}>Shrink</Button><Gap $w={4} /><Button $w={73} $h={19}>Grow</Button></Line>
                <Line $h={23} $x={7}><Button $w={60} $dim>Ring</Button><Gap $w={2} /><Spin /><Gap $w={3} /><Button $w={57} $dim>Loop</Button><Gap $w={2} /><Spin /></Line>
                <Line $h={22} $x={7}><Button $w={149}>Get Stack Selection</Button></Line>
                <Group><legend>Preview Selection</legend>
                  <Line $h={23}><Radio $on /><Gap $w={6} /><Label $w={32}>Off</Label><Radio /><Gap $w={6} /><Label $w={45}>SubObj</Label><Radio /><Gap $w={6} /><Label>Multi</Label></Line>
                </Group>
                <Line $h={22} $right>10 Vertices Selected</Line>
              </Roll>
              {["Soft Selection", "Edit Vertices", "Edit Geometry", "Paint Deformation"].map((t) => (
                <Closed key={t}><Head><b>+</b><span>{t}</span></Head></Closed>
              ))}
            </RollArea>
          </Rollouts>
        </Side>
      </Work>
      <Status>
        <Listener><Mini $c="#dcc3c6" /><Mini $c="#fff">Max to Physc:</Mini></Listener>
        <StatusCol $w={1374}>
          <SRow>
            <Prompt $w={968}>1 Object Selected</Prompt>
            <Bit $w={24}><svg width="11" height="14" viewBox="0 0 11 14"><path d="M2.500 6V4a3 3 0 0 1 6 0v2" fill="none" stroke="#e5e5e5" strokeWidth="1.500" /><path d="M1 6h9v7H1z" fill="#f2e6b6" /><path d="M5.500 8v3" stroke="#333" strokeWidth="1.500" /></svg></Bit>
            <Bit $w={30}><svg width="13" height="14" viewBox="0 0 13 14"><path d="M0 0h13v14H0z" fill="#e8edf0" /><circle cx="6.500" cy="7" r="3" fill="none" stroke="#333" /><path d="M6.500 0v4M6.500 10v4M0 7h3M10 7h3" stroke="#333" /></svg></Bit>
            <Gap $w={1} /><Label $w={11}>X:</Label><Field $w={57} $h={20}>-452,513cm</Field><Gap $w={1} /><Spin />
            <Gap $w={2} /><Label $w={10}>Y:</Label><Field $w={57} $h={20}>109,497cm</Field><Gap $w={1} /><Spin />
            <Gap $w={2} /><Label $w={10}>Z:</Label><Field $w={57} $h={20}>30,68cm</Field><Gap $w={1} /><Spin />
            <Gap $w={2} /><Prompt $w={100}>Grid = 25,4cm</Prompt>
          </SRow>
          <SRow>
            <Prompt $w={1243}>Click or click-and-drag to select objects</Prompt>
            <Bit $w={26}><svg width="12" height="13" viewBox="0 0 12 13"><path d="M3.500.5h8v8.500l-3 3.500H.5V3z" fill="#fff" /><path d="M2.500 3.500h6v7h-6z" fill="#fff" stroke="#555" strokeWidth=".9" /></svg></Bit>
            <Prompt $w={100}>Add Time Tag</Prompt>
          </SRow>
        </StatusCol>
        <KeyCol $w={44} $m={3}>
          <Button $w={44} $h={44}><svg width="25" height="12" viewBox="0 0 25 12"><circle cx="5" cy="6" r="3.700" fill="none" stroke="#060606" strokeWidth="2.200" /><path d="M9 6h15M17 6v4M22 6v5" stroke="#060606" strokeWidth="2.400" /></svg></Button>
        </KeyCol>
        <KeyCol $w={48} $m={3}><Button $w={48} $h={22}>Auto Key</Button><Button $w={48} $h={22}>Set Key</Button></KeyCol>
        <KeyCol $w={115} $m={3} $gap={3}>
          <Combo $w={115} $h={20}>Selected<Chevron c="#777" /></Combo>
          <Bits>
            <Bit $w={25}><svg width="18" height="16" viewBox="0 0 18 16"><path d="M1 10c4 8 4 0 6-5s4-5 5 0 0 8 5 8" fill="none" stroke="#ce6b72" strokeWidth="1.600" /><path d="M18 12v4h-4z" fill="#fff" /></svg></Bit>
            <Button $w={90} $h={21}>Key Filters...</Button>
          </Bits>
        </KeyCol>
        <KeyCol $w={132} $m={4} $gap={0}>
          <Bits>
            <Gap $w={2} /><Bit $w={24}><Play d="M2.500 4v10M10 4v10L4 9zM17 4v10l-6-5z" /></Bit><Thin $w={4} />
            <Bit $w={20}><Play d="M9 4v10L2 9zM11.500 4v10h1V4zM14.500 4v10h1V4zM17 4v10h1V4z" /></Bit>
            <Bit $w={25}><Play d="M6 4v10l8-5z" corner /></Bit>
            <Bit $w={20}><Play d="M2 4v10h1V4zM5 4v10h1V4zM8 4v10h1V4zM11.500 4v10l7-5z" /></Bit><Thin $w={4} />
            <Bit $w={23}><Play d="M3 4v10l6-5zM10 4v10l6-5zM17.500 4v10" /></Bit><Thin $w={8} />
          </Bits>
          <Bits>
            <Gap $w={2} /><Bit $w={24}><Play d="M2.500 5v8M9 5v8L4 9zM12 5v8l5-4zM18 5v8" /></Bit>
            <Gap $w={3} /><Field $w={63} $h={20}>0</Field><Spin /><Thin $w={3} />
            <Bit $w={23}><Icon s={16}><path d="M1 1h15v20H1z" fill="#e8edf2" /><path d="M3 3h8v8H3z" fill="#2a6fb5" /><path d="M3 14h8M3 17h8M13 4h2" stroke="#345" strokeWidth="1.500" /><circle cx="17" cy="17" r="6" fill="#f2f2f2" stroke="#555" /><path d="M17 13v4h4" stroke="#222" fill="none" strokeWidth="1.500" /></Icon></Bit>
          </Bits>
        </KeyCol>
        <NavGrid>{nav.map((n, i) => <Icon key={i} s={17}>{n}</Icon>)}</NavGrid>
      </Status>
    </App_>
  );
}
